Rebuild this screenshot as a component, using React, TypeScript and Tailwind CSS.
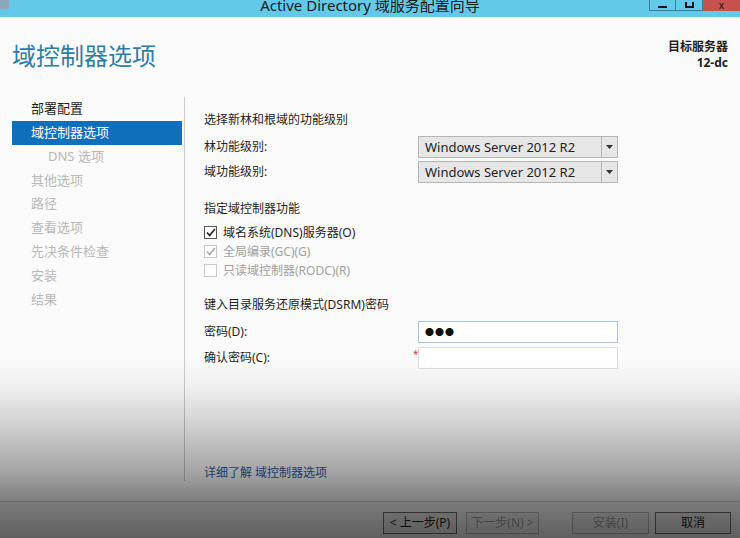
import React from "react";

const font = { fontFamily: '"Noto Sans", "Noto Sans CJK SC", sans-serif' };

function Dropdown({ value }: { value: string }) {
  return (
    <div className="flex h-[22px] w-[200px] border border-[#b5b5b5] bg-[#e6e6e6]">
      <div className="flex flex-1 items-center pl-[6px] text-[13px] text-[#1e1e1e]">{value}</div>
      <div className="flex w-[16px] items-center justify-center border-l border-[#b5b5b5]">
        <svg width="7" height="4" viewBox="0 0 7 4"><path d="M0 0h7L3.5 4z" fill="#333" /></svg>
      </div>
    </div>
  );
}

function Check({ checked, disabled, label }: { checked: boolean; disabled?: boolean; label: string }) {
  const c = disabled ? "#a8a8a8" : "#1e1e1e";
  return (
    <div className="flex h-[19px] items-center gap-[6px]">
      <div className={`flex h-[13px] w-[13px] items-center justify-center border bg-white ${disabled ? "border-[#c8c8c8]" : "border-[#555]"}`}>
        {checked && (
          <svg width="10" height="9" viewBox="0 0 10 9"><path d="M1 4.5l2.6 3L9 1" fill="none" stroke={c} strokeWidth="1.6" /></svg>
        )}
      </div>
      <span className={disabled ? "text-[#a0a0a0]" : "text-[#1e1e1e]"}>{label}</span>
    </div>
  );
}

export default function App() {
  const nav = [
    { t: "部署配置", s: "normal" },
    { t: "域控制器选项", s: "sel" },
    { t: "DNS 选项", s: "sub" },
    { t: "其他选项", s: "dis" },
    { t: "路径", s: "dis" },
    { t: "查看选项", s: "dis" },
    { t: "先决条件检查", s: "dis" },
    { t: "安装", s: "dis" },
    { t: "结果", s: "dis" },
  ];
  return (
    <div className="relative flex h-[538px] w-[740px] flex-col overflow-hidden bg-[#fafafa]" style={font}>
      {/* title bar */}
      <div className="relative flex h-[17px] shrink-0 items-start justify-center overflow-hidden bg-[#64c9e9]">
        <div className="-mt-[5px] text-[15px] leading-[20px] text-[#1a1a1a]">Active Directory 域服务配置向导</div>
        <div className="absolute left-0 top-0 h-[9px] w-[9px] bg-[#8aa8b8]" />
        <div className="absolute right-0 top-0 flex h-[11px]">
          <div className="flex w-[27px] items-end justify-center border border-t-0 border-[#3a7d95] pb-[2px]"><div className="h-[2px] w-[9px] bg-[#111]" /></div>
          <div className="flex w-[27px] items-end justify-center border border-l-0 border-t-0 border-[#3a7d95] pb-[2px]"><div className="h-[6px] w-[9px] border-2 border-t-0 border-[#111]" /></div>
          <div className="flex w-[37px] items-end justify-center bg-[#c75050] pb-[1px] text-[10px] leading-none text-[#111]">x</div>
        </div>
      </div>

      {/* header */}
      <div className="flex h-[80px] shrink-0 items-start justify-between pl-[12px] pr-[12px]">
        <div className="mt-[22px] text-[24px] leading-[34px] text-[#2c7ea3]">域控制器选项</div>
        <div className="mt-[22px] text-right text-[12px] font-bold leading-[16px] text-[#1e1e1e]">
          <div>目标服务器</div>
          <div>12-dc</div>
        </div>
      </div>

      {/* body */}
      <div className="flex h-[384px] shrink-0">
        <div className="w-[184px] shrink-0 pl-[12px] pr-[2px] pt-[0px] text-[13px]">
          {nav.map((n) => (
            <div
              key={n.t}
              className={`flex h-[23.8px] items-center ${
                n.s === "sel"
                  ? "bg-[#0f6fba] pl-[19px] text-white"
                  : n.s === "sub"
                  ? "pl-[36px] text-[#b8b8b8]"
                  : n.s === "dis"
                  ? "pl-[19px] text-[#b8b8b8]"
                  : "pl-[19px] text-[#1e1e1e]"
              }`}
            >
              {n.t}
            </div>
          ))}
        </div>
        <div className="w-[1px] shrink-0 bg-[#c8c8c8]" />
        <div className="flex flex-1 flex-col pl-[19px] pt-[15px] text-[12px] leading-[16px] text-[#1e1e1e]">
          <div>选择新林和根域的功能级别</div>
          <div className="mt-[8px] flex w-[414px] items-center justify-between">
            <span>林功能级别:</span>
            <Dropdown value="Windows Server 2012 R2" />
          </div>
          <div className="mt-[3px] flex w-[414px] items-center justify-between">
            <span>域功能级别:</span>
            <Dropdown value="Windows Server 2012 R2" />
          </div>
          <div className="mt-[18px]">指定域控制器功能</div>
          <div className="mt-[6px] flex flex-col">
            <Check checked label="域名系统(DNS)服务器(O)" />
            <Check checked disabled label="全局编录(GC)(G)" />
            <Check checked={false} disabled label="只读域控制器(RODC)(R)" />
          </div>
          <div className="mt-[17px]">键入目录服务还原模式(DSRM)密码</div>
          <div className="mt-[8px] flex w-[414px] items-center justify-between">
            <span>密码(D):</span>
            <div className="flex h-[22px] w-[200px] items-center border border-[#a9c4e0] bg-white pl-[6px] text-[9px] tracking-[1px] text-[#111]">●●●</div>
          </div>
          <div className="mt-[4px] flex w-[414px] items-center justify-between">
            <span>确认密码(C):</span>
            <div className="relative h-[22px] w-[200px] border border-[#dcdcdc] bg-white">
              <span className="absolute -left-[6px] -top-[2px] text-[10px] text-[#e04040]">*</span>
            </div>
          </div>
          <div className="mt-auto text-[#2a5f9e]">详细了解 域控制器选项</div>
        </div>
      </div>

      {/* bottom bar */}
      <div className="mt-[20px] flex flex-1 flex-col border-t border-[#d0d0d0]">
        <div className="flex justify-end pr-[9px] pt-[10px] text-[12px]">
          <button className="h-[22px] w-[74px] border border-[#707070] bg-[#f0f0f0] text-[#1e1e1e]">&lt; 上一步(P)</button>
          <button className="ml-[9px] h-[22px] w-[73px] border border-[#bcbcbc] bg-[#f4f4f4] text-[#a0a0a0]">下一步(N) &gt;</button>
          <button className="ml-[33px] h-[22px] w-[77px] border border-[#bcbcbc] bg-[#f4f4f4] text-[#a0a0a0]">安装(I)</button>
          <button className="ml-[6px] h-[22px] w-[76px] border border-[#707070] bg-[#f0f0f0] text-[#1e1e1e]">取消</button>
        </div>
      </div>

      {/* fade overlay */}
      <div className="pointer-events-none absolute inset-0 bg-[linear-gradient(to_bottom,rgba(0,0,0,0)_360px,rgba(0,0,0,0.04)_385px,rgba(0,0,0,0.15)_420px,rgba(0,0,0,0.35)_473px,rgba(0,0,0,0.52)_505px,rgba(0,0,0,0.62)_538px)]" />
    </div>
  );
}
